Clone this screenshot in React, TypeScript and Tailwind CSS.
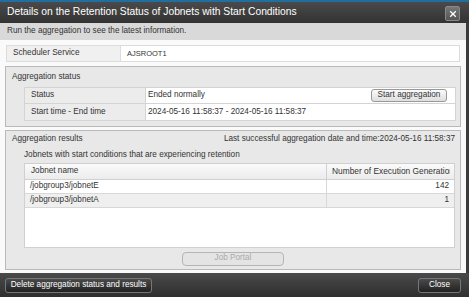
// Retention status dialog for jobnets with start conditions

const rows = [
  { name: '/jobgroup3/jobnetE', count: 142 },
  { name: '/jobgroup3/jobnetA', count: 1 },
];

export default function App() {
  return (
    <div
      className="flex h-[297px] w-[469px] flex-col overflow-hidden bg-[#3b3b3b] text-[8.2px] text-[#333]"
      style={{ fontFamily: '"Liberation Sans", Arial, sans-serif' }}
    >
      {/* Title bar */}
      <div className="flex h-[23px] shrink-0 items-center justify-between border-t-2 border-[#1f6fa3] bg-gradient-to-b from-[#4a4a4a] to-[#333] pl-[7px] pr-[9px]">
        <span className="text-[10.3px] leading-none text-white">
          Details on the Retention Status of Jobnets with Start Conditions
        </span>
        <button className="mt-[2px] flex h-[15px] w-[15px] items-center justify-center rounded-[2px] border border-[#888] bg-gradient-to-b from-[#777] to-[#555]">
          <svg viewBox="0 0 10 10" className="h-[8px] w-[8px]">
            <path d="M1.5 1.5 L8.5 8.5 M8.5 1.5 L1.5 8.5" stroke="white" strokeWidth="1.6" />
          </svg>
        </button>
      </div>

      <div className="flex min-h-0 w-[466px] flex-1 flex-col bg-[#fafafa]">
        {/* Info bar */}
        <div className="flex h-[17px] shrink-0 items-center bg-[#d9d9d9] pl-[7px] text-[#333]">
          Run the aggregation to see the latest information.
        </div>

        {/* Scheduler service */}
        <div className="mx-[6px] mt-[5px] flex h-[17px] shrink-0 border border-[#dcdcdc]">
          <div className="flex w-[114px] items-center border-r border-[#dcdcdc] bg-[#f0f0f0] pl-[6px]">
            Scheduler Service
          </div>
          <div className="flex flex-1 items-center bg-white pl-[6px] text-[7.5px]">AJSROOT1</div>
        </div>

        {/* Aggregation status */}
        <div className="mx-[5px] mt-[4px] flex h-[61px] shrink-0 flex-col border border-[#b9b9b9] bg-[#e8e8e8]">
          <div className="flex h-[20px] items-center pl-[6px]">Aggregation status</div>
          <div className="ml-[18px] mr-[4px] flex flex-col border border-[#d4d4d4]">
            <div className="flex h-[16px] border-b border-[#d4d4d4]">
              <div className="flex w-[121px] items-center border-r border-[#d4d4d4] bg-[#ececec] pl-[6px]">
                Status
              </div>
              <div className="flex flex-1 items-center justify-between bg-white pl-[2px] pr-[8px]">
                <span>Ended normally</span>
                <button className="h-[13px] w-[76px] rounded-[3px] border border-[#999] bg-gradient-to-b from-[#fbfbfb] to-[#dedede] leading-none text-[#333]">
                  Start aggregation
                </button>
              </div>
            </div>
            <div className="flex h-[16px]">
              <div className="flex w-[121px] items-center border-r border-[#d4d4d4] bg-[#ececec] pl-[6px]">
                Start time - End time
              </div>
              <div className="flex flex-1 items-center bg-white pl-[2px]">
                2024-05-16 11:58:37 - 2024-05-16 11:58:37
              </div>
            </div>
          </div>
        </div>

        {/* Aggregation results */}
        <div className="mx-[5px] mt-[3px] mb-[3px] flex min-h-0 flex-1 flex-col border border-[#b9b9b9] bg-[#e8e8e8]">
          <div className="flex h-[16px] shrink-0 items-center justify-between pl-[6px] pr-[5px]">
            <span>Aggregation results</span>
            <span>Last successful aggregation date and time:2024-05-16 11:58:37</span>
          </div>
          <div className="flex h-[16px] shrink-0 items-center pl-[18px]">
            Jobnets with start conditions that are experiencing retention
          </div>
          <div className="ml-[18px] mr-[5px] flex h-[85px] shrink-0 flex-col border border-[#d0d0d0] bg-white">
            <div className="flex h-[16px] border-b border-[#d0d0d0] bg-gradient-to-b from-[#fafafa] to-[#ececec]">
              <div className="flex flex-1 items-center border-r border-[#d0d0d0] pl-[6px]">Jobnet name</div>
              <div className="mr-[4px] flex w-[123px] items-center overflow-hidden whitespace-nowrap pl-[5px] text-[8.4px]">
                Number of Execution Generations
              </div>
            </div>
            {rows.map((row, i) => (
              <div
                key={row.name}
                className={`flex h-[14px] border-b border-[#d8d8d8] ${i % 2 === 1 ? 'bg-[#efefef]' : 'bg-white'}`}
              >
                <div className="flex flex-1 items-center border-r border-[#d8d8d8] pl-[5px]">{row.name}</div>
                <div className="flex w-[127px] items-center justify-end pr-[5px]">{row.count}</div>
              </div>
            ))}
          </div>
          <div className="flex flex-1 items-center justify-center">
            <button
              disabled
              className="h-[14px] w-[102px] rounded-[4px] border border-[#b5b5b5] bg-[#e4e4e4] leading-none text-[#aaa]"
            >
              Job Portal
            </button>
          </div>
        </div>
      </div>

      {/* Footer */}
      <div className="flex h-[24px] shrink-0 items-center justify-between bg-gradient-to-b from-[#4a4a4a] to-[#2f2f2f] pl-[5px] pr-[8px]">
        <button className="h-[15px] w-[147px] rounded-[3px] border border-[#777] bg-gradient-to-b from-[#4a4a4a] to-[#222] leading-none text-white">
          Delete aggregation status and results
        </button>
        <button className="h-[15px] w-[43px] rounded-[3px] border border-[#777] bg-gradient-to-b from-[#4a4a4a] to-[#222] leading-none text-white">
          Close
        </button>
      </div>
    </div>
  );
}
